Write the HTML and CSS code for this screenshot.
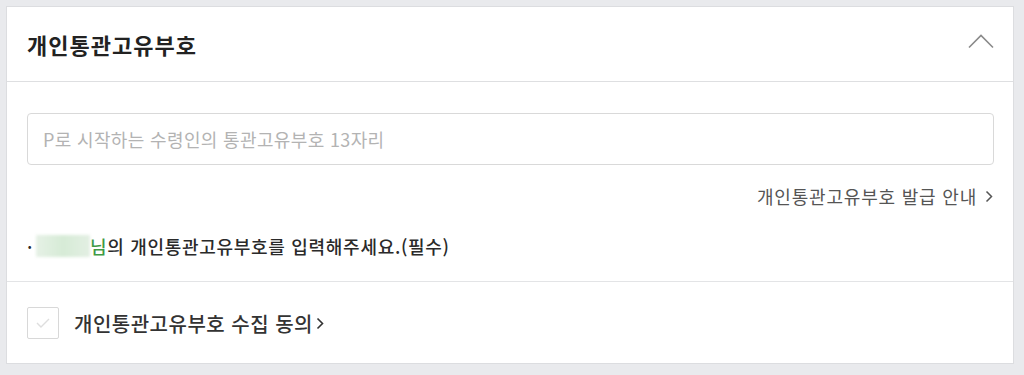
FILE: index.html
```html
<!DOCTYPE html>
<html lang="ko">
<head>
<meta charset="utf-8">
<link rel="stylesheet" href="styles.css">
</head>
<body>
<div class="card">
  <div class="head">
    <h2 class="title">개인통관고유부호</h2>
    <svg class="up" width="26" height="16" viewBox="0 0 26 16"><path d="M1 14.5 L13 2.5 L25 14.5" fill="none" stroke="#8a8a8a" stroke-width="1.6"/></svg>
  </div>
  <div class="body">
    <div class="input"><span class="ph">P로 시작하는 수령인의 통관고유부호 13자리</span></div>
    <div class="linkrow"><span class="link">개인통관고유부호 발급 안내<svg class="chev" width="8" height="13" viewBox="0 0 8 13"><path d="M1.5 1.5 L6.5 6.5 L1.5 11.5" fill="none" stroke="#555" stroke-width="1.5"/></svg></span></div>
    <p class="info"><span class="dot">·</span><span class="blur"></span><span class="nim">님</span>의 개인통관고유부호를 입력해주세요.(필수)</p>
  </div>
  <div class="agree">
    <span class="box"><svg width="16" height="12" viewBox="0 0 16 12"><path d="M2 6 L6 10 L14 2" fill="none" stroke="#dedede" stroke-width="1.4"/></svg></span>
    <span class="agree-text">개인통관고유부호 수집 동의<svg class="chev2" width="8" height="13" viewBox="0 0 8 13"><path d="M1.5 1.5 L6.5 6.5 L1.5 11.5" fill="none" stroke="#333" stroke-width="1.6"/></svg></span>
  </div>
</div>
</body>
</html>
```
FILE: styles.css
```css
html, body {
  margin: 0;
  padding: 0;
  background: #e9eaed;
  font-family: "Noto Sans CJK KR", "Noto Sans", sans-serif;
}
.card {
  margin: 6px 10px 0 6px;
  background: #fff;
  border: 1px solid #dcdde0;
}
.head {
  height: 74px;
  display: flex;
  align-items: center;
  justify-content: space-between;
  padding: 0 20px;
  border-bottom: 1px solid #dedfe1;
}
.title {
  margin: 0;
  font-size: 22px;
  font-weight: 700;
  color: #222;
  letter-spacing: 1px;
}
.up {
  display: block;
  margin-top: -6px;
  margin-right: -1px;
}
.body {
  padding: 31px 19px 23px 20px;
  border-bottom: 1px solid #e3e4e6;
}
.input {
  height: 50px;
  border: 1px solid #d9d9d9;
  border-radius: 4px;
  display: flex;
  align-items: center;
  padding: 0 15px;
}
.ph {
  font-size: 18px;
  color: #b3b3b3;
  letter-spacing: 0.35px;
}
.linkrow {
  margin-top: 19px;
  display: flex;
  justify-content: flex-end;
  line-height: 24px;
}
.link {
  font-size: 18px;
  color: #555;
  display: flex;
  align-items: center;
  letter-spacing: 0.8px;
}
.chev {
  margin-left: 8px;
  margin-right: 1px;
}
.info {
  margin: 26px 0 0;
  line-height: 24px;
  font-size: 18px;
  font-weight: 500;
  color: #2a2a2a;
  display: flex;
  align-items: center;
  letter-spacing: 0.7px;
}
.dot {
  width: 9px;
}
.blur {
  width: 54px;
  height: 22px;
  background: linear-gradient(90deg, #e6f1e6, #d6ebd6 50%, #e3efe3);
  filter: blur(1.5px);
}
.nim {
  color: #3f9a45;
}
.agree {
  display: flex;
  align-items: center;
  padding: 25px 20px 24px;
}
.box {
  width: 30px;
  height: 30px;
  border: 1px solid #d8d8d8;
  border-radius: 2px;
  display: flex;
  align-items: center;
  justify-content: center;
}
.agree-text {
  margin-left: 15px;
  font-size: 20px;
  font-weight: 500;
  color: #333;
  display: flex;
  align-items: center;
  letter-spacing: 0.5px;
}
.chev2 {
  margin-left: 3px;
}
```
